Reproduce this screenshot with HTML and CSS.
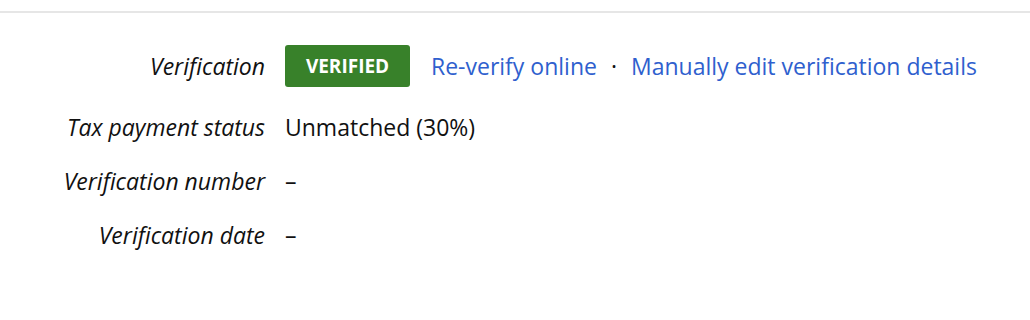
FILE: index.html
```html
<!DOCTYPE html>
<html lang="en">
<head>
    <meta charset="UTF-8">
    <title>Verification</title>
    <link rel="stylesheet" href="styles.css">
</head>
<body>
    <div class="topbar"></div>
    <div class="details">
        <div class="row">
            <div class="label">Verification</div>
            <div class="value">
                <span class="badge">VERIFIED</span>
                <a href="#">Re-verify online</a>
                <span class="sep">·</span>
                <a href="#">Manually edit verification details</a>
            </div>
        </div>
        <div class="row">
            <div class="label">Tax payment status</div>
            <div class="value">Unmatched (30%)</div>
        </div>
        <div class="row">
            <div class="label">Verification number</div>
            <div class="value">–</div>
        </div>
        <div class="row">
            <div class="label">Verification date</div>
            <div class="value">–</div>
        </div>
    </div>
</body>
</html>
```

FILE: styles.css
```css
body {
    margin: 0;
    font-family: "Open Sans", "Noto Sans", sans-serif;
    font-size: 23px;
    color: #111;
    background: #fff;
}
.topbar {
    height: 11px;
    border-bottom: 2px solid #e6e6e6;
}
.details {
    padding-top: 30px;
}
.row {
    display: flex;
    align-items: center;
    min-height: 54px;
}
.row:first-child {
    min-height: 46px;
    margin-bottom: 11px;
}
.label {
    width: 265px;
    text-align: right;
    font-style: italic;
}
.value {
    padding-left: 20px;
    display: flex;
    align-items: center;
}
.badge {
    display: inline-block;
    background-color: #38812a;
    color: white;
    font-weight: bold;
    font-size: 19px;
    width: 125px;
    height: 42px;
    line-height: 42px;
    text-align: center;
    border-radius: 3px;
    margin-right: 21px;
}
a {
    color: #2f5fce;
    text-decoration: none;
}
.sep {
    margin: 0 14px;
}
.dash {
    display: inline-block;
}
```
